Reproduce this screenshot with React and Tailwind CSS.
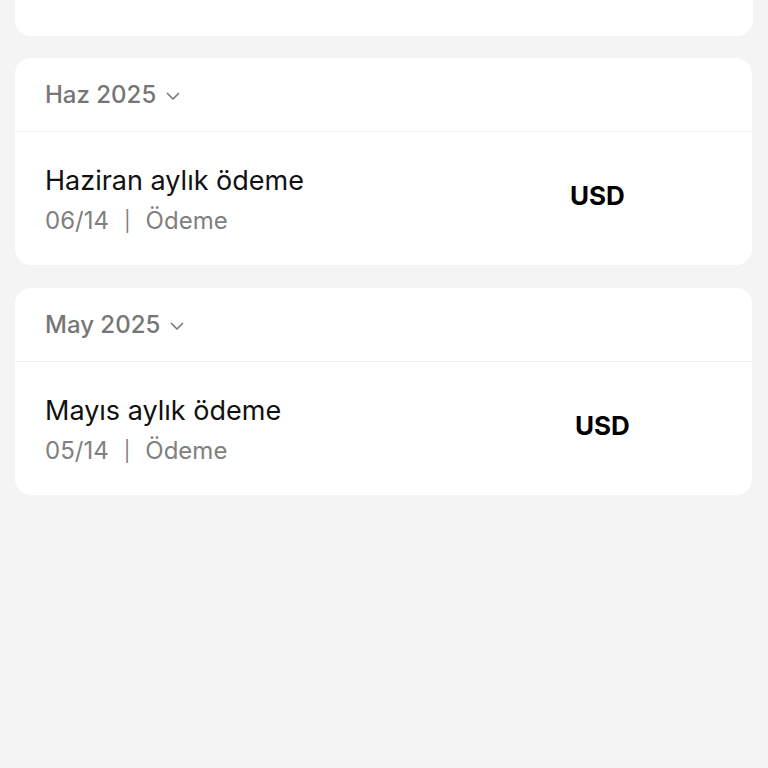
function Chevron() {
  return (
    <svg width="16" height="16" viewBox="0 0 16 16" fill="none" className="ml-[9px] mt-[3px]">
      <path d="M2.5 5.5l5.5 5.5 5.5-5.5" stroke="#7a7a7a" strokeWidth="1.7" strokeLinecap="round" strokeLinejoin="round" />
    </svg>
  );
}

function MonthCard({ month, title, date, amount, amountOffset }) {
  return (
    <div className="bg-white rounded-2xl">
      <div className="h-[74px] flex items-center px-[30px] border-b border-[#f0f0f0]">
        <span className="text-[24px] font-medium text-[#767676]">{month}</span>
        <Chevron />
      </div>
      <div className="h-[133px] flex items-center justify-between pl-[30px] pr-[30px]">
        <div className="flex flex-col pt-[6px]">
          <span className="text-[27px] text-[#111] leading-[34px]">{title}</span>
          <span className="text-[24px] text-[#808080] leading-[34px] mt-[6px]">
            {date}
            <span className="mx-[15px] text-[20px] relative -top-[1px]">|</span>
            Ödeme
          </span>
        </div>
        <div className={"w-[152px] text-[26px] font-bold text-black -mt-[6px] " + amountOffset}>{amount}</div>
      </div>
    </div>
  );
}

export default function App() {
  return (
    <div
      className="min-h-[768px] bg-[#f4f4f4] px-[15px]"
      style={{ fontFamily: "Inter, 'Noto Sans', sans-serif" }}
    >
      <div className="h-[36px] bg-white rounded-b-2xl"></div>
      <div className="mt-[22px] flex flex-col gap-[23px] pr-[1px]">
        <MonthCard month="Haz 2025" title="Haziran aylık ödeme" date="06/14" amount="USD" amountOffset="pl-0" />
        <MonthCard month="May 2025" title="Mayıs aylık ödeme" date="05/14" amount="USD" amountOffset="pl-[5px]" />
      </div>
    </div>
  );
}
